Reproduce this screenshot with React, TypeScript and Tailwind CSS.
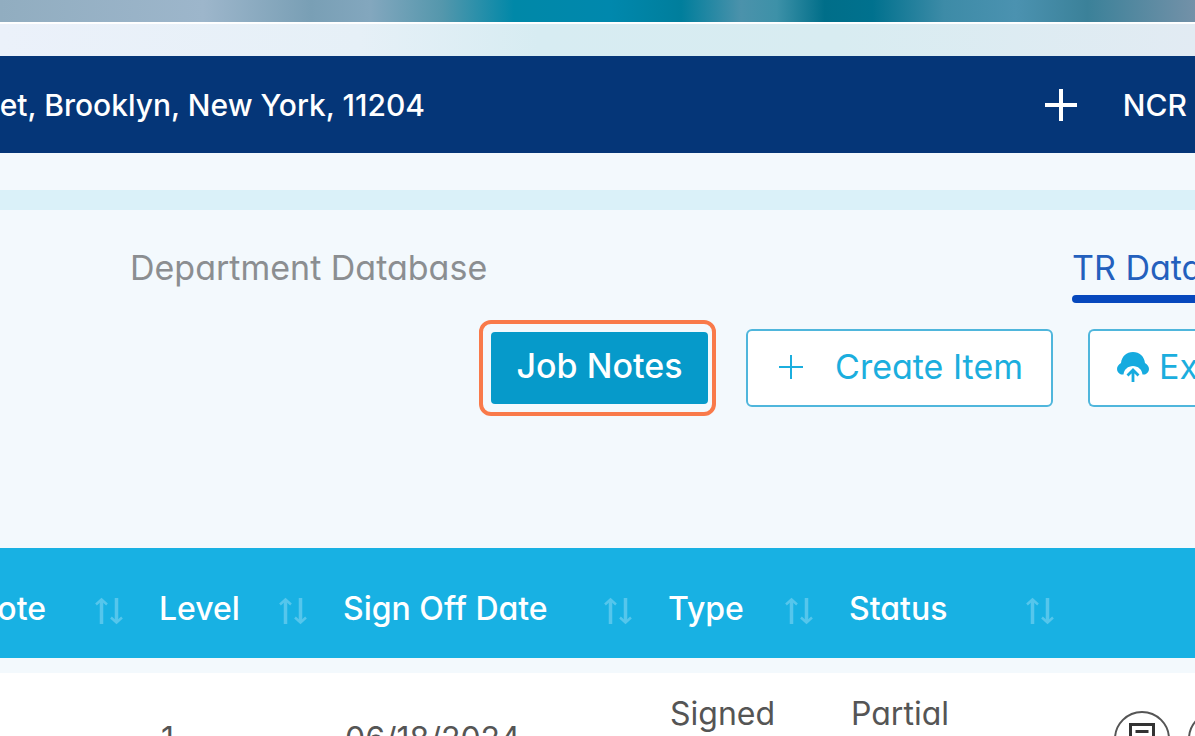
import React from "react";

const columns = [
  { label: "Level", width: "w-[184px]" },
  { label: "Sign Off Date", width: "w-[325px]" },
  { label: "Type", width: "w-[181px]" },
  { label: "Status", width: "w-[241px]" },
];

function SortIcon() {
  return (
    <svg
      className="mt-1 h-[28px] w-[28px] shrink-0"
      viewBox="0 0 28 28"
      fill="none"
      stroke="#55c6ec"
      strokeWidth="3.5"
      aria-hidden="true"
    >
      <path d="M6.500 27V3" />
      <path d="M1 7.500L6.500 2.500L12 7.500" strokeWidth="2.500" />
      <path d="M21.500 1V25" />
      <path d="M16 20.500L21.500 25.500L27 20.500" strokeWidth="2.500" />
    </svg>
  );
}

function CloudUpIcon() {
  return (
    <svg className="h-[32px] w-[32px] shrink-0" viewBox="0 0 32 32" aria-hidden="true">
      <path
        fill="#16abdf"
        d="M4 23.5C1.500 22.500 0 20.500 0 18C0 15.500 1.500 13.500 4 12C4.800 5.300 9.500 1 16 1C22.500 1 27.200 5.300 28 12C30.500 13.500 32 15.500 32 18C32 20.500 30.500 22.500 28 23.500H25.500C25 18.500 21 15 16 15C11 15 7 18.500 6.500 23.500Z"
      />
      <path d="M16 31V19.500M10.500 24.500L16 19L21.500 24.500" fill="none" stroke="#16abdf" strokeWidth="2.800" />
    </svg>
  );
}

function NoteButton() {
  return (
    <button
      type="button"
      aria-label="Notes"
      className="flex size-14 shrink-0 items-center justify-center rounded-full border-2 border-[#555555]"
    >
      <svg className="size-8" viewBox="0 0 32 32" fill="none" stroke="#333333" strokeWidth="3" aria-hidden="true">
        <path d="M4.500 1.500H27.500V30.500H4.500Z" />
        <path d="M9.500 8.500H22.500M9.500 15H22.500M9.500 21H18" strokeWidth="2.800" />
      </svg>
    </button>
  );
}

export default function App() {
  return (
    <div className="h-screen overflow-hidden bg-[#f3f9fd] font-[Inter,'Liberation_Sans',sans-serif] [font-feature-settings:'cv11']">
      <div className="h-[22px] bg-[linear-gradient(90deg,#91adc0_0%,#9db6cb_17%,#799fb5_26%,#83a7be_31%,#5497ac_37%,#0088a8_43%,#0088ad_51%,#007e9c_57%,#4b92ab_62%,#3d91a8_65%,#006e89_69%,#00718e_73%,#3d8ba7_79%,#4b92b0_85%,#3b8199_91%,#7391a8_100%)]" />
      <div className="h-[34px] border-t-2 border-white bg-[linear-gradient(90deg,#ebf1fa_0%,#e6f0f7_30%,#d7ecf2_45%,#d8ecf1_70%,#e2ebf3_100%)]" />

      <header className="flex h-[97px] items-center justify-between bg-[#053678] pr-2 text-white">
        <div className="flex w-[425px] justify-end overflow-hidden whitespace-nowrap">
          <h1 className="text-[30px] leading-[48px] font-medium">et, Brooklyn, New York, 11204</h1>
        </div>
        <button type="button" className="flex items-center gap-[46px] text-[30px] leading-[48px] font-medium">
          <svg className="size-8" viewBox="0 0 32 32" stroke="currentColor" strokeWidth="4" aria-hidden="true">
            <path d="M0 16H32M16 0V32" />
          </svg>
          NCR
        </button>
      </header>
      <div className="h-[37px] bg-[#f3f9fd]" />
      <div className="h-[20px] bg-[#daf1f9]" />

      <nav className="flex items-start justify-between pt-[34px] pl-[130px] text-[34px] leading-[48px] whitespace-nowrap">
        <a href="#department" className="text-[#8b8e91]">Department Database</a>
        <a href="#tr" className="w-[123px] overflow-hidden text-[#2360bd]">
          TR Database
          <span className="mt-[3px] block h-2 rounded-l-full bg-[#0648bd]" />
        </a>
      </nav>

      <div className="mt-[17px] flex items-center justify-end text-[34px] leading-[48px] whitespace-nowrap">
        <div className="mr-[30px] rounded-[12px] border-4 border-[#f97a4a] p-2 pr-1">
          <button type="button" className="h-[72px] w-[217px] rounded-[4px] bg-[#069aca] pb-1 font-medium text-white">
            Job Notes
          </button>
        </div>
        <button
          type="button"
          className="mr-[35px] flex h-[78px] w-[307px] items-center justify-between rounded-[6px] border-2 border-[#4fb6dc] bg-white pr-[28px] pb-[2px] pl-[31px] text-[#1baede]"
        >
          <svg className="size-6" viewBox="0 0 24 24" stroke="currentColor" strokeWidth="2" aria-hidden="true">
            <path d="M0 12H24M12 0V24" />
          </svg>
          Create Item
        </button>
        <button
          type="button"
          className="flex h-[78px] w-[107px] items-center gap-[10px] overflow-hidden rounded-l-[6px] border-2 border-r-0 border-[#4fb6dc] bg-white pb-[2px] pl-[27px] text-[#1baede]"
        >
          <CloudUpIcon />
          Export
        </button>
      </div>

      <table className="mt-[132px] w-full table-fixed border-separate border-spacing-0 text-[32px] leading-[48px]">
        <thead>
          <tr className="h-[110px] bg-[#18b1e3] text-white">
            <th className="w-[141px] p-0 pt-3 pr-[18px] font-medium">
              <div className="flex items-center justify-between">
                <span className="flex w-[46px] justify-end overflow-hidden">ote</span>
                <SortIcon />
              </div>
            </th>
            {columns.map((column) => (
              <th key={column.label} className={`${column.width} p-0 px-[18px] pt-3 font-medium whitespace-nowrap`}>
                <div className="flex items-center justify-between">
                  <span>{column.label}</span>
                  <SortIcon />
                </div>
              </th>
            ))}
            <th aria-label="Actions" />
          </tr>
        </thead>
        <tbody>
          <tr className="h-[15px]" aria-hidden="true">
            <td colSpan={6} className="p-0" />
          </tr>
          <tr className="h-[132px] bg-white text-[#555555]">
            <td />
            <td className="px-[20px]">1</td>
            <td className="px-[20px]">06/18/2024</td>
            <td className="px-[20px] pt-[17px] align-top">Signed</td>
            <td className="px-[20px] pt-[17px] align-top">Partial</td>
            <td className="pl-[42px]">
              <div className="flex gap-[18px] overflow-hidden">
                <NoteButton />
                <NoteButton />
              </div>
            </td>
          </tr>
        </tbody>
      </table>
    </div>
  );
}
